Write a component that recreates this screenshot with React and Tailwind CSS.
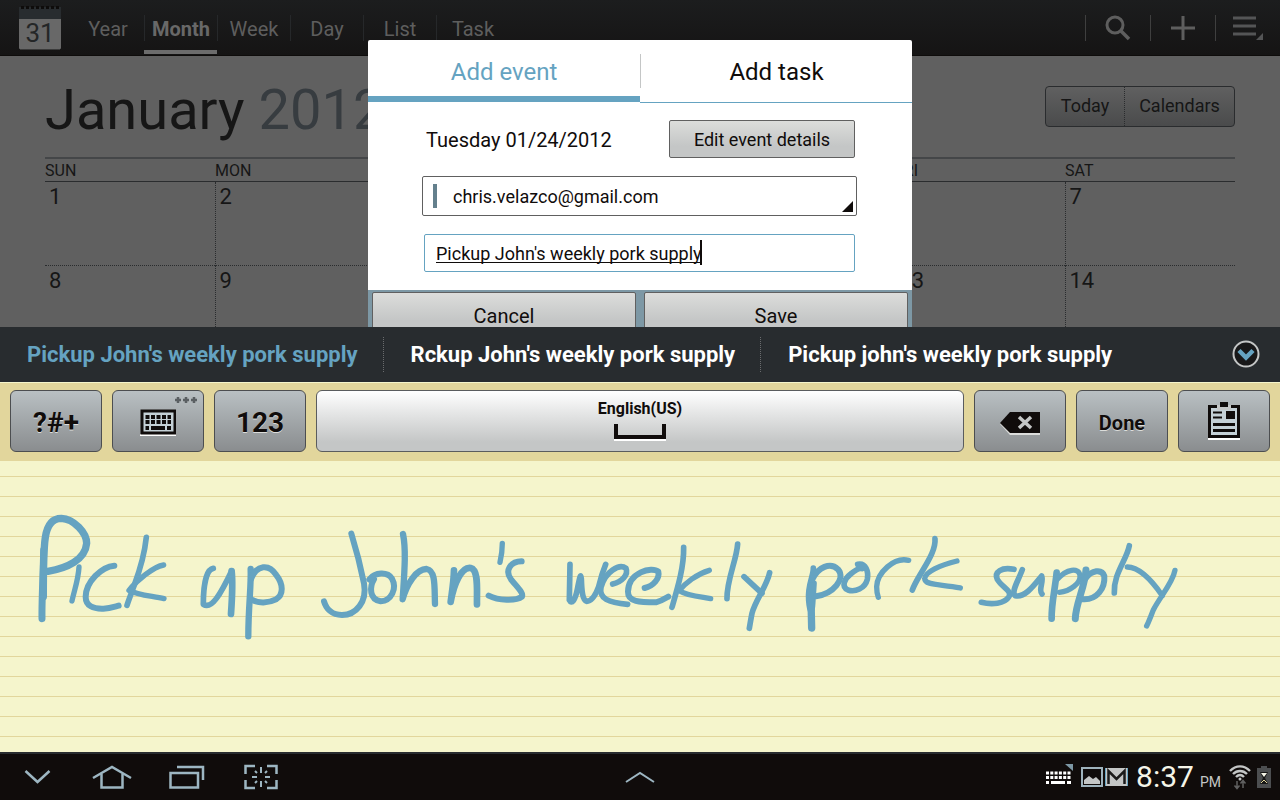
import React from 'react';

const TABS = ['Year', 'Month', 'Week', 'Day', 'List', 'Task'];
const DAYS = ['SUN', 'MON', 'TUE', 'WED', 'THU', 'FRI', 'SAT'];
const WEEKS = [
  [1, 2, 3, 4, 5, 6, 7],
  [8, 9, 10, 11, 12, 13, 14],
];
const SUGGESTIONS = [
  "Pickup John's weekly pork supply",
  "Rckup John's weekly pork supply",
  "Pickup john's weekly pork supply",
];

/* Pen strokes on the writing pad, one group per inked run: [path, width]. */
const INK = [
  {
    place: 'translate(20 500) scale(0.3333)',
    strokes: [
      ['M66 356C65 300 70 220 71 150', 19],
      ['M70 290C70 220 70 150 76 112C82 72 100 55 124 55C162 57 200 98 200 130C196 180 140 205 84 214', 20],
      ['M177 201C175 240 163 270 156 303', 14],
      ['M283 197C245 200 198 245 197 290C197 318 220 327 250 326C270 325 284 320 296 317', 16],
      ['M379 112C374 160 358 215 343 255C334 280 326 300 321 316', 15],
      ['M431 195C400 200 350 242 327 271C355 286 400 288 432 296', 14],
      ['M580 205C558 208 550 260 550 313C575 330 602 282 635 213', 15],
      ['M635 213C639 250 636 300 633 342', 18],
      ['M692 207C694 260 685 320 685 409', 17],
      ['M693 238C710 192 748 192 768 224C790 252 792 284 768 298C745 310 715 310 697 300', 16],
    ],
  },
  {
    place: 'translate(310 500) scale(0.3333)',
    strokes: [
      ['M124 101C136 140 152 200 162 250C172 306 138 345 96 345C65 345 48 325 42 304', 16],
      ['M178 238C195 217 232 214 246 236C262 266 244 302 212 304C178 298 178 262 192 238', 16],
      ['M279 102C289 150 283 220 278 298C290 252 320 206 350 207C378 212 373 262 375 312', 17],
      ['M432 211C431 250 425 280 422 306C432 250 455 200 482 204C507 210 500 270 501 313', 18],
      ['M577 130C577 150 574 170 570 187', 14],
      ['M635 184C600 185 584 212 603 238C622 262 641 278 636 290C618 304 565 302 536 287', 16],
    ],
  },
  {
    place: 'translate(550 500) scale(0.3333)',
    strokes: [
      ['M60 193L58 300C65 315 76 300 82 268C88 238 92 215 94 236C95 270 97 300 110 304C125 304 137 285 146 260C152 235 160 210 167 193', 15],
      ['M188 252C215 245 236 225 228 205C208 190 165 215 153 262C146 295 175 308 233 313', 15],
      ['M284 264C310 258 330 235 325 215C305 198 235 218 234 275C233 306 270 307 318 307C334 303 345 296 355 290', 16],
      ['M401 142C402 200 384 260 366 322', 15],
      ['M478 211C440 222 405 250 388 272C412 287 450 290 482 296', 14],
      ['M563 132C560 180 530 240 531 296', 15],
      ['M582 230L636 280', 15],
      ['M659 218C650 260 616 300 606 340C602 360 600 375 598 385', 15],
    ],
  },
  {
    place: 'translate(790 500) scale(0.3333)',
    strokes: [
      ['M70 204C71 228 52 255 56 300C59 340 66 345 68 310L72 250', 15],
      ['M63 300L65 384', 20],
      ['M66 240C84 200 122 186 144 208C168 236 130 282 78 289', 16],
      ['M203 193C228 188 236 215 232 238C225 266 195 277 174 270C152 260 164 236 182 222C194 212 206 203 216 206', 15],
      ['M356 181C312 170 262 218 260 260C260 275 262 284 265 292', 14],
      ['M435 116C438 150 410 190 390 225C380 242 372 256 367 270', 15],
      ['M501 183C450 195 405 216 404 236C405 257 450 252 511 264', 14],
      ['M672 208C635 200 612 216 622 238C636 262 667 272 657 290C644 312 605 315 574 307', 15],
      ['M697 209C686 240 662 276 676 287C705 295 735 252 755 228C762 246 744 270 756 282', 15],
      ['M800 218C795 270 784 310 785 356', 18],
      ['M802 238C830 206 866 202 870 226C873 250 840 274 808 277', 14],
      ['M888 210C885 262 857 310 856 356', 19],
      ['M886 236C905 210 936 206 943 228C946 266 920 300 880 298', 16],
      ['M1018 137C1010 180 970 222 973 279', 15],
      ['M1012 201C1050 202 1085 240 1117 287', 14],
      ['M1155 211C1148 250 1110 290 1090 330C1080 355 1076 366 1070 378', 14],
    ],
  },
];

function CalendarLogo() {
  return (
    <svg width="44" height="46" viewBox="0 0 44 46" aria-hidden="true">
      <rect x="1" y="3" width="42" height="41" rx="1" fill="#686868" />
      <rect x="1" y="2" width="42" height="12" fill="#282c2f" />
      <path d="M3 2.500H42" stroke="#0e0c0b" strokeWidth="3" strokeDasharray="3 2" />
      <path d="M2 44.500H42" stroke="#3a3a3a" />
      <text x="22" y="37" textAnchor="middle" fontFamily="Roboto, sans-serif" fontSize="26" fill="#242627">31</text>
    </svg>
  );
}

function TopBar() {
  return (
    <header className="flex h-14 items-stretch border-b border-[#0e0c0b] bg-linear-to-b from-[#1c1d1e] to-[#151414] text-[#5e5e5e]">
      <div className="flex items-center pr-[9px] pl-[18px]">
        <CalendarLogo />
      </div>
      <nav className="flex">
        {TABS.map((t) => (
          <button
            key={t}
            className={
              t === 'Month'
                ? 'h-[54px] w-[73px] border-b-4 border-[#6c6c6c] pt-1.5 text-xl font-bold text-[#686868]'
                : 'group h-[54px] w-[73px] border-b-4 border-transparent pt-1.5 text-xl'
            }
          >
            <span className="block h-[26px] border-l border-[#26282a] leading-7 group-first:border-transparent">{t}</span>
          </button>
        ))}
      </nav>
      <div className="ml-auto flex items-center">
        <button aria-label="Search" className="flex h-[26px] w-[65px] items-center justify-center border-l border-[#3f3f3f]">
          <svg width="26" height="26" viewBox="0 0 26 26" fill="none" stroke="currentColor">
            <circle cx="10" cy="10" r="8" strokeWidth="3" />
            <path d="M15.500 15.500L24 24" strokeWidth="3.500" />
          </svg>
        </button>
        <button aria-label="Add" className="flex h-[26px] w-[65px] items-center justify-center border-l border-[#3f3f3f]">
          <svg width="24" height="24" viewBox="0 0 24 24" stroke="currentColor" strokeWidth="3">
            <path d="M0 12H24M12 0V24" />
          </svg>
        </button>
        <button aria-label="Menu" className="flex h-[26px] w-[65px] items-center justify-center border-l border-[#3f3f3f] text-[#545556]">
          <svg width="32" height="26" viewBox="0 0 32 26" stroke="currentColor" strokeWidth="3">
            <path d="M1 3H24M1 11H24M1 19H24" />
            <path d="M31 18V25H24Z" fill="currentColor" stroke="none" />
          </svg>
        </button>
      </div>
    </header>
  );
}

function MonthView() {
  return (
    <div className="px-[45px] pt-[21px] text-[#161616]">
      <div className="mb-[14px] flex items-center justify-between">
        <h1 className="text-[56px] leading-[66px]">
          January <span className="text-[#373c40]">2012</span>
        </h1>
        <div className="mb-2 flex h-[41px] rounded-sm border border-[#2a2c2e] bg-linear-to-b from-[#606060] to-[#4a4b4c] text-lg">
          <button className="w-[79px] border-r border-dotted border-[#2a2c2e]">Today</button>
          <button className="w-[109px]">Calendars</button>
        </div>
      </div>
      <table className="w-full table-fixed border-collapse">
        <thead>
          <tr className="h-[23px] border-t-2 border-b border-t-[#444648] border-b-[#2a2c2e]">
            {DAYS.map((d) => (
              <th key={d} scope="col" className="p-0 pt-0.5 text-left text-base leading-5 font-normal">
                {d}
              </th>
            ))}
          </tr>
        </thead>
        <tbody>
          {WEEKS.map((week, i) => (
            <tr key={week[0]} className={i === 0 ? 'h-[84px] border-b border-dotted border-[#2a2c2e]' : 'h-[61px]'}>
              {week.map((n) => (
                <td
                  key={n}
                  className="border-l border-dotted border-[#2a2c2e] px-1 pt-0.5 align-top text-[22px] leading-[26px] first:border-l-0"
                >
                  {n}
                </td>
              ))}
            </tr>
          ))}
        </tbody>
      </table>
    </div>
  );
}

function EventDialog() {
  return (
    <div role="dialog" aria-label="Add event" className="w-[544px] max-w-full rounded-t-xs bg-white text-[#100c0b]">
      <div role="tablist" className="flex text-2xl">
        <button role="tab" aria-selected="true" className="h-[62px] flex-1 border-b-[6px] border-[#65a3c1] pt-2 text-[#65a3c1]">
          Add event
        </button>
        <div className="flex h-[63px] flex-1 border-b border-[#65a3c1]">
          <span className="mt-3.5 h-[34px] w-px bg-[#c4c6c6]" />
          <button role="tab" aria-selected="false" className="flex-1 pt-0.5">
            Add task
          </button>
        </div>
      </div>
      <div className="pt-[17px] pr-[55px] pb-[18px] pl-[54px]">
        <div className="flex items-center justify-between pr-0.5 pl-1">
          <p className="pt-0.5 text-xl">Tuesday 01/24/2012</p>
          <button className="h-[38px] w-[186px] rounded-xs border border-[#606060] bg-linear-to-b from-[#dcdddb] to-[#c4c6c6] to-70% pt-0.5 text-lg">
            Edit event details
          </button>
        </div>
        <div className="relative mt-[18px]">
          <select
            aria-label="Account"
            className="block h-10 w-full appearance-none rounded-xs border border-[#606060] bg-white pt-0.5 pl-[30px] text-lg"
          >
            <option>chris.velazco@gmail.com</option>
          </select>
          <span className="absolute top-2 left-[11px] h-6 w-1 bg-[#64808d]" />
          <svg className="absolute right-1 bottom-1" width="11" height="11" viewBox="0 0 11 11" aria-hidden="true">
            <path d="M11 0V11H0Z" fill="#100c0b" />
          </svg>
        </div>
        <div className="relative mx-0.5 mt-[18px]">
          <input
            aria-label="Event title"
            defaultValue="Pickup John's weekly pork supply"
            className="block h-[38px] w-full rounded-xs border border-[#65a3c1] pl-[11px] text-lg outline-none"
          />
          <span className="absolute top-1.5 left-3 h-[25px] w-[266px] border-r-2 border-[#100c0b]" />
          <span className="absolute bottom-[9px] left-3 h-px w-[266px] bg-[#100c0b]" />
        </div>
      </div>
      <div className="flex gap-2 bg-[#7d98a5] px-1 pt-0.5 text-xl">
        {['Cancel', 'Save'].map((b) => (
          <button key={b} className="h-12 flex-1 rounded-xs border border-[#606060] bg-linear-to-b from-[#dcdddb] to-[#c4c6c6] to-60%">
            {b}
          </button>
        ))}
      </div>
    </div>
  );
}

function Suggestions() {
  return (
    <div className="flex h-[55px] items-center justify-between bg-[#282c2f] pr-5">
      <div className="flex text-[22px] leading-[35px] font-bold text-white">
        {SUGGESTIONS.map((s) => (
          <button
            key={s}
            className="border-r border-dotted border-[#6a6c6e] pr-[25px] pl-[27px] whitespace-nowrap first:text-[#65a3c1] last:border-r-0"
          >
            {s}
          </button>
        ))}
      </div>
      <button aria-label="More suggestions">
        <svg width="28" height="28" viewBox="0 0 28 28" fill="none">
          <circle cx="14" cy="14" r="12.500" fill="#181819" stroke="#c4c6c6" strokeWidth="2" />
          <path d="M7 10.500L14 17.500L21 10.500" stroke="#65a3c1" strokeWidth="4.500" />
        </svg>
      </button>
    </div>
  );
}

function Key({ label, children }) {
  return (
    <button
      aria-label={label}
      className="relative flex h-[62px] w-[92px] shrink-0 items-center justify-center rounded-md border border-[#4c4e50] bg-linear-to-b from-[#b9c0c3] to-[#8a8d8f] pt-1 text-[#100c0b]"
    >
      {children}
    </button>
  );
}

function KeyRow() {
  return (
    <div className="flex gap-2.5 border-t border-[#f5f5cc] bg-[#e2d69c] px-2.5 pt-[7px] pb-[9px]">
      <Key label="Symbols">
        <span className="text-[28px] font-bold [text-shadow:0_1px_0_#dcdddb]">?#+</span>
      </Key>
      <Key label="Keyboard">
        <svg width="36" height="28" viewBox="0 0 36 28" aria-hidden="true">
          <path d="M0 26H36" stroke="#fff" strokeWidth="2" />
          <rect x="2" y="2" width="33" height="22" fill="#c4d0d6" stroke="#100c0b" strokeWidth="3" />
          <path d="M5.500 8H31M5.500 13H31" stroke="#100c0b" strokeWidth="4" strokeDasharray="4 1.500" />
          <path d="M5.500 19H9M11 19H25M27 19H31" stroke="#100c0b" strokeWidth="4" />
        </svg>
        <svg className="absolute top-1.5 right-1.5" width="22" height="6" viewBox="0 0 22 6" aria-hidden="true">
          <path d="M3 0V6M0 3H6M11 0V6M8 3H14M19 0V6M16 3H22" stroke="#5a5f62" strokeWidth="2.500" />
        </svg>
      </Key>
      <Key label="Numbers">
        <span className="text-[28px] font-bold [text-shadow:0_1px_0_#dcdddb]">123</span>
      </Key>
      <button className="flex h-[62px] flex-1 flex-col items-center rounded-md border border-[#5a5c5e] bg-linear-to-b from-white to-[#c4c6c6] to-85% pt-2 text-[#100c0b]">
        <span className="text-base leading-5 font-bold">English(US)</span>
        <svg className="mt-1" width="52" height="18" viewBox="0 0 52 18" aria-hidden="true">
          <path d="M0 17H52" stroke="#fff" strokeWidth="2" />
          <path d="M2 1V14H50V1" fill="none" stroke="#100c0b" strokeWidth="4" />
        </svg>
      </button>
      <Key label="Backspace">
        <svg width="40" height="24" viewBox="0 0 40 24" aria-hidden="true">
          <path d="M10 2H40V24H10L0 13Z" fill="#dcdddb" />
          <path d="M10 1H40V22H10L0 12Z" fill="#100c0b" />
          <path d="M19 6L31 17M31 6L19 17" stroke="#c4c6c6" strokeWidth="3.500" />
        </svg>
      </Key>
      <Key label="Done">
        <span className="text-xl font-bold [text-shadow:0_1px_0_#dcdddb]">Done</span>
      </Key>
      <Key label="Clipboard">
        <svg className="mb-1" width="32" height="38" viewBox="0 0 32 38" aria-hidden="true">
          <path d="M0 37H32" stroke="#fff" strokeWidth="2" />
          <rect x="1.500" y="4.500" width="29" height="30" fill="#c4d0d6" stroke="#100c0b" strokeWidth="3" />
          <path d="M9 3H23V8H9Z" fill="#c4c6c6" />
          <path d="M12 0H20V5H12Z M18 9H27V17H18Z" fill="#100c0b" />
          <path d="M5 10.500H14M5 15.500H14" stroke="#100c0b" strokeWidth="2" />
          <path d="M5 22.500H27M5 28.500H27" stroke="#100c0b" strokeWidth="3" />
        </svg>
      </Key>
    </div>
  );
}

function WritingPad() {
  return (
    <div className="flex-1 bg-[#f5f5cc] bg-[repeating-linear-gradient(to_bottom,transparent_0px,transparent_19px,#e2d69c_19px,#e2d69c_20px)] bg-[position:0_-4px]">
      <svg className="block w-full" viewBox="0 461 1280 291" role="img" aria-label="Handwriting: Pick up John's weekly pork supply">
        {INK.map((run) => (
          <g key={run.place} transform={run.place} fill="none" stroke="#65a3c1" strokeLinecap="round" strokeLinejoin="round">
            {run.strokes.map(([d, w]) => (
              <path key={d} d={d} strokeWidth={w + 2} />
            ))}
          </g>
        ))}
      </svg>
    </div>
  );
}

function SystemBar() {
  return (
    <footer className="grid h-12 grid-cols-[1fr_auto_1fr] items-center border-t-2 border-[#282c2f] bg-[#100c0b] text-[#9db6c2]">
      <div className="flex items-center gap-[37px] pl-6">
        <button aria-label="Back">
          <svg width="27" height="24" viewBox="0 0 27 24" fill="none" stroke="currentColor" strokeWidth="2.500">
            <path d="M1.500 6L13.500 17L25.500 6" />
          </svg>
        </button>
        <button aria-label="Home" className="pl-1">
          <svg width="40" height="24" viewBox="0 0 40 24" fill="none" stroke="currentColor" strokeWidth="2.500">
            <path d="M1 13L20 2L39 13" />
            <path d="M9.500 9V22.500H30.500V9" />
          </svg>
        </button>
        <button aria-label="Recent apps">
          <svg width="36" height="24" viewBox="0 0 36 24" fill="none" stroke="currentColor" strokeWidth="2.500">
            <path d="M8 2H34V15" />
            <rect x="1.500" y="8" width="27.500" height="14.500" />
          </svg>
        </button>
        <button aria-label="Capture screen" className="pl-0.5">
          <svg width="34" height="26" viewBox="0 0 34 26" fill="none" stroke="currentColor" strokeWidth="2.500">
            <path d="M1.500 10V2H11M23 2H32.500V10M32.500 16V24H23M11 24H1.500V16" />
            <path d="M17 3V9M17 17V23M8 13H13M21 13H26M11 7L13 9M23 7L21 9M11 19L13 17M23 19L21 17" strokeWidth="2" />
          </svg>
        </button>
      </div>
      <button aria-label="Show tray">
        <svg width="30" height="16" viewBox="0 0 30 16" fill="none" stroke="currentColor" strokeWidth="2">
          <path d="M1 13L15 4L29 13" />
        </svg>
      </button>
      <div className="flex items-center justify-end pr-[9px]">
        <svg className="mb-1" width="27" height="24" viewBox="0 0 27 24" aria-hidden="true">
          <path d="M0 10H25M0 14.500H25" stroke="#fff" strokeWidth="3" strokeDasharray="3 1.300" />
          <path d="M0 19.500H3M5 19.500H19M21 19.500H25" stroke="#fff" strokeWidth="3" />
          <path d="M19 1H27V8Z" fill="#7d98a5" />
        </svg>
        <svg className="ml-2" width="22" height="20" viewBox="0 0 22 20" aria-hidden="true">
          <rect x="1" y="1" width="20" height="18" fill="none" stroke="#9fb3bd" strokeWidth="2" />
          <path d="M3 17V13L8 9L12 12L15 10L19 14V17Z" fill="#c4c6c6" />
        </svg>
        <svg className="ml-0.5" width="23" height="18" viewBox="0 0 23 18" aria-hidden="true">
          <rect width="23" height="18" fill="#c4c6c6" />
          <path d="M3.500 16V3L11.500 11L19.500 3V16" fill="none" stroke="#1a1a1a" strokeWidth="2.500" />
          <path d="M.5 0V18M22.500 0V18" stroke="#65a3c1" />
        </svg>
        <p className="ml-2 flex items-baseline gap-1.5 text-[#f5f5e8]">
          <span className="text-3xl">8:37</span>
          <span className="text-sm text-[#c4c6c6]">PM</span>
        </p>
        <svg className="ml-2" width="22" height="26" viewBox="0 0 22 26" fill="none" aria-hidden="true">
          <path d="M1 7C7 .8 15 .8 21 7M4 10C8 6 14 6 18 10M7 13C9.500 10.500 12.500 10.500 15 13" stroke="#c4c6c6" strokeWidth="2.400" />
          <circle cx="11" cy="15" r="1.500" fill="#c4c6c6" />
          <path d="M8 17V24M5.500 21.500L8 24.500L10.500 21.500M14 24V17M11.500 19.500L14 16.500L16.500 19.500" stroke="#606060" strokeWidth="1.500" />
        </svg>
        <svg className="ml-1.5" width="14" height="22" viewBox="0 0 14 22" aria-hidden="true">
          <path d="M4 0H10V2H14V22H0V2H4Z" fill="#4c4e50" />
          <path d="M3 6H11L8 12L11 18H3L6 12Z" fill="#161616" />
          <path d="M4 7H10L7 11Z" fill="#f5f5e8" />
          <path d="M4 17L7 14L10 17" stroke="#e2d69c" fill="none" />
        </svg>
      </div>
    </footer>
  );
}

export default function App() {
  return (
    <div className="flex min-h-screen flex-col bg-[#100c0b] font-[Roboto,sans-serif]">
      <main className="relative overflow-hidden bg-[#606060]">
        <TopBar />
        <MonthView />
        <div className="absolute inset-0 flex items-start justify-center overflow-hidden pt-10">
          <EventDialog />
        </div>
      </main>
      <Suggestions />
      <KeyRow />
      <WritingPad />
      <SystemBar />
    </div>
  );
}
